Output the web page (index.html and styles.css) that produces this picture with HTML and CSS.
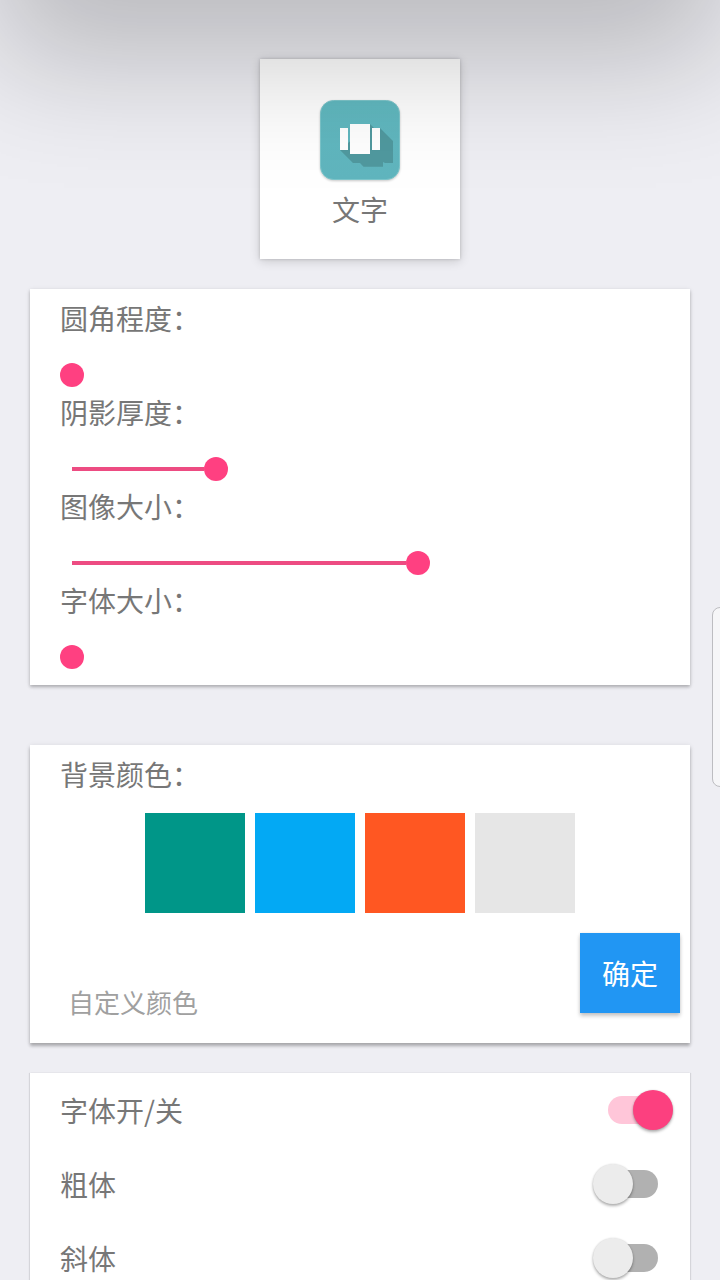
FILE: index.html
```html
<!DOCTYPE html>
<html lang="zh-CN">
<head>
<meta charset="utf-8">
<title>文字</title>
<link rel="stylesheet" href="styles.css">
</head>
<body>
<main class="screen">
  <section class="card preview">
    <svg class="app-icon" width="88" height="88" viewBox="0 0 88 88">
      <defs>
        <linearGradient id="face" x1="0" y1="0" x2="0" y2="1">
          <stop offset="0" stop-color="#61b9c0"/>
          <stop offset="1" stop-color="#60b5be"/>
        </linearGradient>
      </defs>
      <rect class="icon-base" x="4.5" y="4.5" width="79" height="79" rx="13" fill="url(#face)" stroke="#7cc5ca"/>
      <path fill="#50999f" d="M24 54 37 67H44L47.500 70.700H67V66L69 67H77V45L64 32 58 32 54 28Z"/>
      <path fill="#fff" d="M24 32h8v22h-8zM34 28h20v30H34zM56 32h8v22h-8z"/>
    </svg>
    <span class="preview-name">文字</span>
  </section>

  <section class="card sliders">
    <div class="field"><span class="label">圆角程度：</span><div class="slider"><i class="thumb"></i></div></div>
    <div class="field"><span class="label">阴影厚度：</span><div class="slider"><i class="track" style="width:132px"></i><i class="thumb"></i></div></div>
    <div class="field"><span class="label">图像大小：</span><div class="slider"><i class="track" style="width:334px"></i><i class="thumb"></i></div></div>
    <div class="field"><span class="label">字体大小：</span><div class="slider"><i class="thumb"></i></div></div>
  </section>

  <section class="card colors">
    <span class="label">背景颜色：</span>
    <div class="swatches">
      <i class="swatch teal"></i><i class="swatch blue"></i><i class="swatch orange"></i><i class="swatch gray"></i>
    </div>
    <div class="custom">
      <span class="hint">自定义颜色</span>
      <button class="confirm">确定</button>
    </div>
  </section>

  <section class="options">
    <div class="option"><span>字体开/关</span><div class="switch on"><i class="knob"></i></div></div>
    <div class="option"><span>粗体</span><div class="switch"><i class="knob"></i></div></div>
    <div class="option"><span>斜体</span><div class="switch"><i class="knob"></i></div></div>
  </section>
  <div class="edge-handle"></div>
</main>
</body>
</html>
```
FILE: styles.css
```css
* {
  box-sizing: border-box;
}

body {
  margin: 0;
  background: #eeeef3;
}

.screen {
  position: relative;
  display: flex;
  flex-direction: column;
  width: 720px;
  height: 1280px;
  padding: 59px 30px 0;
  overflow: hidden;
  background: #eeeef3;
  color: #777;
  font: 28px/42px "Noto Sans CJK SC", sans-serif;
}

/* soft shade cast from above the top edge, over all content */
.screen::before {
  content: "";
  position: absolute;
  z-index: 2;
  top: -500px;
  left: -4px;
  width: 728px;
  height: 362px;
  box-shadow: 0 200px 116px rgba(0, 0, 0, .215);
  pointer-events: none;
}

.card {
  flex: none;
  background: #fff;
  box-shadow: 0 2px 3px rgba(0, 0, 0, .22), 0 1px 5px rgba(0, 0, 0, .1);
}

.preview {
  display: flex;
  flex-direction: column;
  align-items: center;
  align-self: center;
  width: 200px;
  height: 200px;
  padding-top: 37px;
  box-shadow: 0 0 3px rgba(0, 0, 0, .18), 0 2px 10px rgba(0, 0, 0, .16);
}

.icon-base {
  filter: drop-shadow(0 1px 1px rgba(0, 0, 0, .22));
}

.preview-name {
  margin-top: 4px;
}

.sliders {
  height: 396px;
  margin-top: 30px;
  padding: 8px 30px 0;
}

.field {
  height: 94px;
}

.label {
  display: block;
  white-space: nowrap;
}

.slider {
  display: flex;
  align-items: center;
  height: 24px;
  margin-top: 24px;
}

.track {
  height: 4px;
  margin-left: 12px;
  background: #ed4c82;
}

.thumb {
  width: 24px;
  height: 24px;
  border-radius: 50%;
  background: #ff4081;
}

.colors {
  height: 298px;
  margin-top: 60px;
  padding: 8px 10px 0 30px;
  box-shadow: 0 3px 3px rgba(0, 0, 0, .24), 0 1px 5px rgba(0, 0, 0, .12);
}

.swatches {
  display: flex;
  justify-content: center;
  gap: 10px;
  margin: 18px 20px 0 0;
}

.swatch {
  width: 100px;
  height: 100px;
}

.teal { background: #009688; }
.blue { background: #03a9f4; }
.orange { background: #ff5722; }
.gray { background: #e6e6e6; }

.custom {
  display: flex;
  align-items: flex-start;
  justify-content: space-between;
  margin-top: 20px;
  padding-left: 8px;
}

.hint {
  margin-top: 48px;
  color: #a0a0a0;
  font-size: 26px;
}

.confirm {
  width: 100px;
  height: 80px;
  padding: 0;
  border: 0;
  background: #2196f3;
  box-shadow: 0 3px 4px rgba(0, 0, 0, .22), 0 0 3px rgba(0, 0, 0, .08);
  color: #fff;
  font: inherit;
}

.options {
  flex: none;
  margin-top: 30px;
  background: #fff;
  box-shadow: 1px 0 1px rgba(0, 0, 0, .1), -1px 0 1px rgba(0, 0, 0, .1);
}

.option {
  display: flex;
  align-items: center;
  justify-content: space-between;
  height: 74px;
  padding: 0 32px 0 30px;
}

.switch {
  display: flex;
  align-items: center;
  width: 50px;
  height: 28px;
  border-radius: 14px;
  background: #b1b1b1;
}

.knob {
  flex: none;
  width: 40px;
  height: 40px;
  margin-left: -15px;
  border-radius: 50%;
  background: #ececec;
  box-shadow: 0 2px 3px rgba(0, 0, 0, .3), 0 0 2px rgba(0, 0, 0, .12);
}

.switch.on {
  background: #ffc6d9;
}

.switch.on .knob {
  margin-left: 25px;
  background: #fc407f;
}

.edge-handle {
  position: absolute;
  top: 607px;
  right: -8px;
  width: 16px;
  height: 180px;
  border: 1px solid #bdbdc1;
  border-radius: 8px;
  background: #f6f6f8;
}
```
